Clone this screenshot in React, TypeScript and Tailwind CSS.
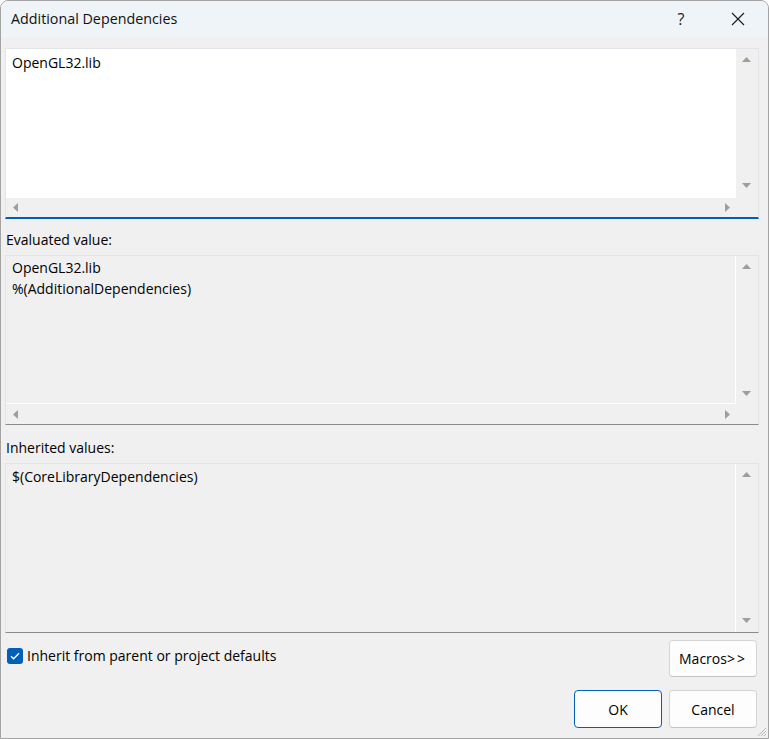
import React from "react";

function Tri({ dir }: { dir: "up" | "down" | "left" | "right" }) {
  const pts = {
    up: "0,5 4.5,0 9,5",
    down: "0,0 9,0 4.5,5",
    left: "5,0 5,9 0,4.5",
    right: "0,0 5,4.5 0,9",
  }[dir];
  const vertical = dir === "up" || dir === "down";
  return (
    <svg
      width={vertical ? 9 : 5}
      height={vertical ? 5 : 9}
      viewBox={vertical ? "0 0 9 5" : "0 0 5 9"}
      className="block"
    >
      <polygon points={pts} fill="#9e9e9e" />
    </svg>
  );
}

function VScroll({ downPad }: { downPad: string }) {
  return (
    <div className={`w-[21px] flex flex-col items-center justify-between pt-[8px] ${downPad}`}>
      <Tri dir="up" />
      <Tri dir="down" />
    </div>
  );
}

function HScroll() {
  return (
    <div className="flex-1 flex items-center justify-between pl-[7px] pr-[6px]">
      <Tri dir="left" />
      <Tri dir="right" />
    </div>
  );
}

export default function App() {
  return (
    <div className="relative w-[769px] h-[739px] flex flex-col bg-[#f0f0f0] border border-[#a3a3a3] rounded-t-[8px] overflow-hidden font-['Open_Sans',sans-serif] text-[14px] text-black">
      {/* Title bar */}
      <div className="h-[36px] shrink-0 flex items-center bg-[#eef4f7] pl-[10px]">
        <span className="text-[14.3px] text-[#111]">Additional Dependencies</span>
        <span className="ml-auto w-[20px] text-center text-[16px] text-[#222] mr-[40px]">?</span>
        <svg width="14" height="14" viewBox="0 0 14 14" className="mr-[23px]">
          <path d="M1 1 L13 13 M13 1 L1 13" stroke="#1a1a1a" strokeWidth="1.1" />
        </svg>
      </div>

      {/* Body */}
      <div className="flex-1 flex flex-col pl-[4px] pr-[9px] pt-[11px]">
        {/* Editable box */}
        <div className="h-[171px] flex flex-col border-x border-t border-[#e1e4e8] border-b-2 border-b-[#005fb8]">
          <div className="flex h-[149px]">
            <div className="w-[730px] bg-white pl-[6px] pt-[3px] leading-[21px]">OpenGL32.lib</div>
            <VScroll downPad="pb-[10px]" />
          </div>
          <div className="flex h-[19px]">
            <div className="w-[730px] flex">
              <HScroll />
            </div>
            <div className="w-[21px]" />
          </div>
        </div>

        <div className="mt-[11px] mb-[5px] h-[20px] leading-[20px] pl-[1px]">Evaluated value:</div>

        {/* Evaluated box */}
        <div className="h-[170px] flex flex-col border-x border-t border-[#e4e4e4] border-b border-b-[#8c8c8c]">
          <div className="flex h-[148px]">
            <div className="w-[730px] border-r border-b border-white pl-[6px] pt-[1px] leading-[21px]">
              <div>OpenGL32.lib</div>
              <div>%(AdditionalDependencies)</div>
            </div>
            <VScroll downPad="pb-[8px]" />
          </div>
          <div className="flex h-[20px]">
            <div className="w-[730px] flex">
              <HScroll />
            </div>
            <div className="w-[21px]" />
          </div>
        </div>

        <div className="mt-[13px] mb-[5px] h-[20px] leading-[20px] pl-[1px]">Inherited values:</div>

        {/* Inherited box */}
        <div className="h-[170px] flex border-x border-t border-[#e4e4e4] border-b border-b-[#8c8c8c]">
          <div className="w-[730px] border-r border-white pl-[6px] pt-[2px] leading-[21px]">
            $(CoreLibraryDependencies)
          </div>
          <VScroll downPad="pb-[9px]" />
        </div>

        {/* Checkbox + Macros */}
        <div className="mt-[7px] flex items-start justify-between">
          <label className="flex items-center gap-[4px] ml-[2px] mt-[6px]">
            <span className="w-[16px] h-[16px] rounded-[3px] bg-[#005fb8] flex items-center justify-center">
              <svg width="10" height="8" viewBox="0 0 10 8">
                <path d="M1 4.2 L3.6 6.8 L9 1.2" fill="none" stroke="white" strokeWidth="1.3" />
              </svg>
            </span>
            <span className="leading-[20px]">Inherit from parent or project defaults</span>
          </label>
          <button className="w-[88px] h-[37px] mr-[2px] bg-[#fdfdfd] border border-[#d5d5d5] border-b-[#c4c4c4] rounded-[4px] text-[14px]">
            Macros<span className="tracking-[2px]">&gt;&gt;</span>
          </button>
        </div>

        {/* OK / Cancel */}
        <div className="mt-[13px] flex justify-end gap-[7px] mr-[2px]">
          <button className="w-[88px] h-[38px] bg-[#fdfdfd] border border-[#005fb8] rounded-[4px] text-[14px]">
            OK
          </button>
          <button className="w-[88px] h-[38px] bg-[#fdfdfd] border border-[#d5d5d5] border-b-[#c4c4c4] rounded-[4px] text-[14px]">
            Cancel
          </button>
        </div>
      </div>

      {/* Resize grip */}
      <svg width="11" height="11" viewBox="0 0 11 11" className="absolute right-[1px] bottom-[1px]">
        <path d="M10 2 L2 10 M10 5 L5 10 M10 8 L8 10" stroke="#b8b8b8" strokeWidth="1" />
      </svg>
    </div>
  );
}
